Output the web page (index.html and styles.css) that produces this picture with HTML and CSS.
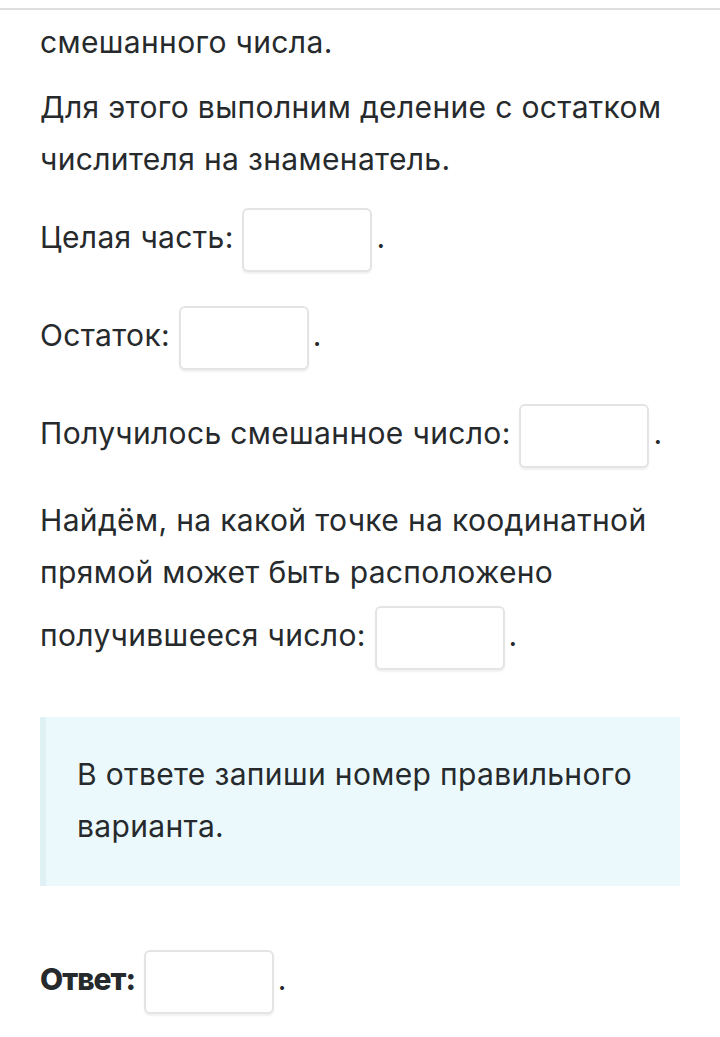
FILE: index.html
```html
<!DOCTYPE html>
<html lang="ru">
    <head>
        <meta charset="UTF-8">
        <title>Смешанное число</title>
        <link rel="stylesheet" href="styles.css">
    </head>
    <body>
        <div class="topline"></div>
        <div id="task">
            <p class="first">смешанного числа.</p>
            <p class="para">Для этого выполним деление с остатком числителя на знаменатель.</p>
            <p class="row row-first">Целая часть: <span class="field"></span>.</p>
            <p class="row">Остаток: <span class="field"></span>.</p>
            <p class="row">Получилось смешанное число: <span class="field"></span>.</p>
            <p class="row">Найдём, на какой точке на коодинатной прямой может быть расположено получившееся число: <span class="field"></span>.</p>
            <div class="note">
                <p>В ответе запиши номер правильного варианта.</p>
            </div>
            <p class="row answer"><b>Ответ:</b> <span class="field"></span>.</p>
        </div>
    </body>
</html>
```

FILE: styles.css
```css
*{
    margin:0;
    padding:0;
}
body{
    background:#fff;
    color:#262a2c;
    font-family:Inter, "Noto Sans", sans-serif;
    font-size:30px;
    line-height:52px;
    letter-spacing:0.35px;
}
.topline{
    margin-top:8px;
    height:2px;
    background-color:#dedede;
}
#task{
    padding:0 40px;
}
.first{
    margin-top:6px;
}
.para{
    margin-top:13px;
}
.row{
    margin-top:18px;
}
.row-first{
    margin-top:15px;
}
.field{
    display:inline-block;
    width:126px;
    height:60px;
    margin:8px 4px 8px 0;
    vertical-align:middle;
    border:2px solid #e4e4e4;
    border-radius:6px;
    box-shadow:0 2px 2px rgba(0,0,0,0.06);
    background:#fff;
}
.note{
    margin-top:39px;
    height:169px;
    box-sizing:border-box;
    padding:31px 20px 0 31px;
    background-color:#ebf9fd;
    border-left:6px solid #e0f1f6;
}
.answer{
    margin-top:56px;
}
.answer b{
    font-weight:800;
    letter-spacing:-1px;
}
```
